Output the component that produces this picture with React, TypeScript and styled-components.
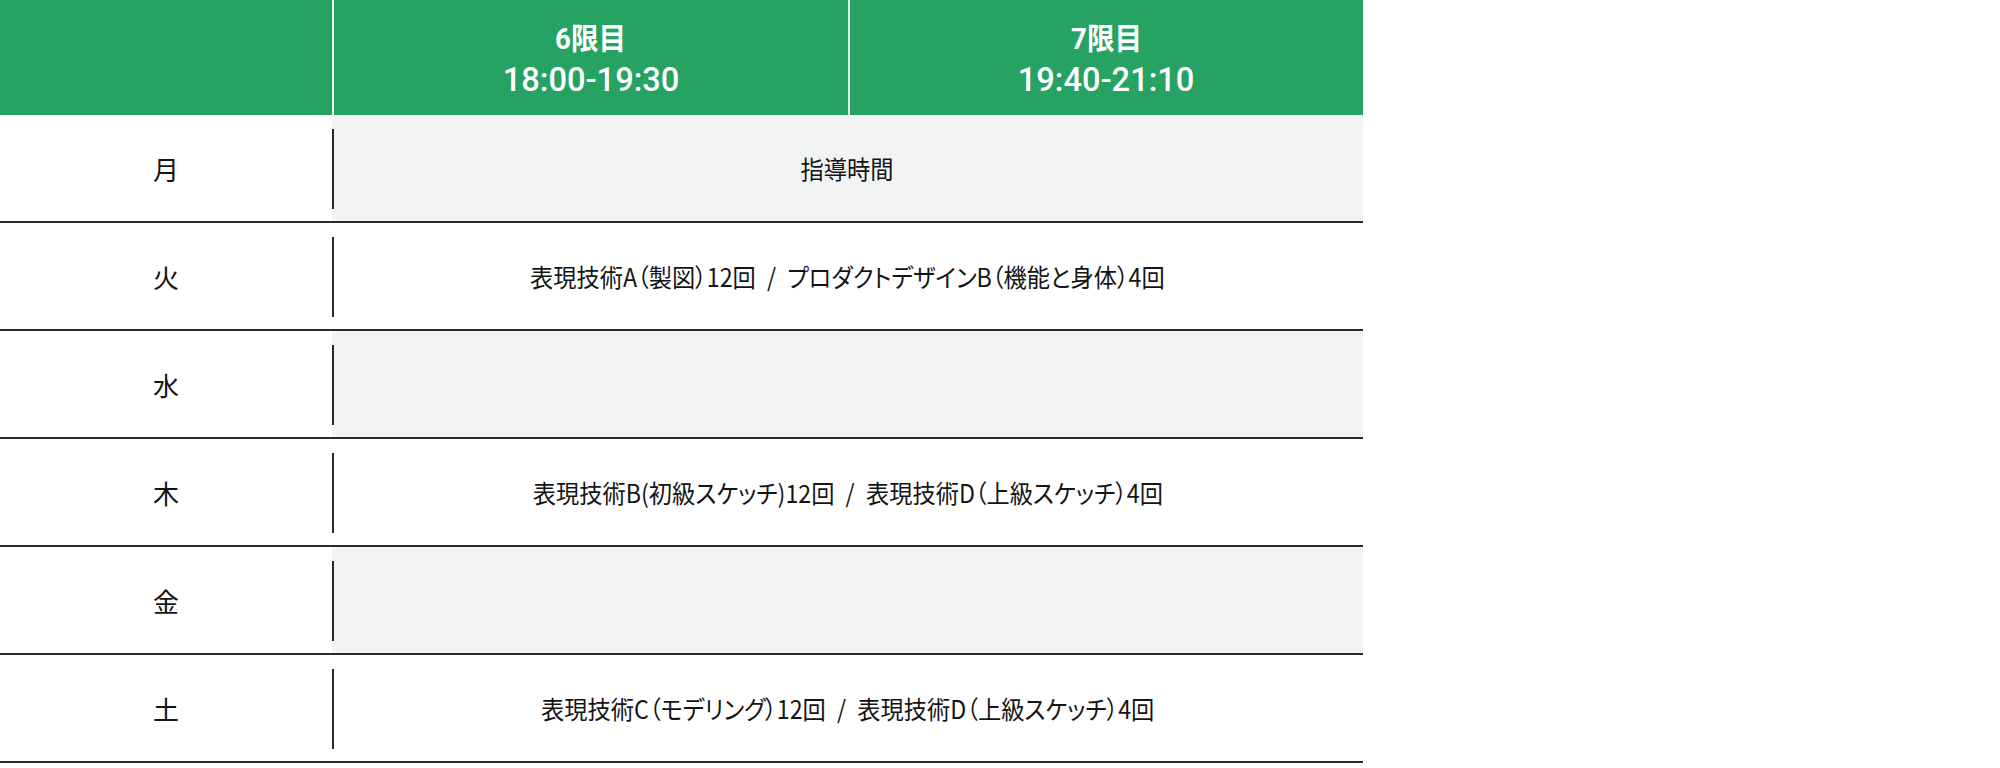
import styled, { createGlobalStyle } from "styled-components";

const GlobalStyle = createGlobalStyle`
  html, body {
    margin: 0;
    padding: 0;
    background: #ffffff;
  }
  body {
    font-family: "Noto Sans CJK JP", "Noto Sans", sans-serif;
    color: #141414;
  }
`;

const Table = styled.div`
  width: 1363px;
  display: grid;
  grid-template-columns: 332px 516px 515px;
`;

const HeadCell = styled.div<{ $divider?: boolean }>`
  height: 115px;
  background: #26a262;
  color: #ffffff;
  display: flex;
  flex-direction: column;
  align-items: center;
  justify-content: center;
  border-left: ${(props) => (props.$divider ? "2px solid #e6f3ea" : "none")};
  font-family: "Roboto", "Noto Sans CJK JP", sans-serif;
  line-height: 40px;
  padding-top: 2px;
  box-sizing: border-box;
`;

const Period = styled.span`
  display: inline-block;
  font-size: 30px;
  font-weight: 700;
  transform: scaleX(0.92);
`;

const Time = styled.span`
  display: inline-block;
  font-size: 34px;
  font-weight: 500;
  transform: scaleX(0.96);
`;

const Row = styled.div`
  grid-column: 1 / -1;
  display: grid;
  grid-template-columns: 332px 1fr;
  height: 108px;
  border-bottom: 2px solid #2a2a2a;
  box-sizing: border-box;
`;

const DayCell = styled.div`
  display: flex;
  align-items: center;
  justify-content: center;
  font-size: 26px;
  font-weight: 400;
  background: #ffffff;
`;

const Content = styled.div<{ $shaded: boolean }>`
  position: relative;
  display: flex;
  align-items: center;
  justify-content: center;
  background: ${(props) => (props.$shaded ? "#f2f3f5" : "#ffffff")};

  &::before {
    content: "";
    position: absolute;
    left: 0;
    top: 14px;
    bottom: 12px;
    width: 2px;
    background: #2a2a2a;
  }
`;

const ContentText = styled.span`
  display: inline-block;
  white-space: nowrap;
  font-size: 25px;
  font-feature-settings: "palt";
  transform: scaleX(0.93);
`;

const Slash = styled.span`
  margin: 0 12px;
`;

const rows = [
  { day: "月", parts: ["指導時間"] },
  { day: "火", parts: ["表現技術A（製図）12回", "プロダクトデザインB（機能と身体）4回"] },
  { day: "水", parts: [] },
  { day: "木", parts: ["表現技術B(初級スケッチ)12回", "表現技術D（上級スケッチ）4回"] },
  { day: "金", parts: [] },
  { day: "土", parts: ["表現技術C（モデリング）12回", "表現技術D（上級スケッチ）4回"] },
];

const App = () => {
  return (
    <>
      <GlobalStyle />
      <Table>
        <HeadCell />
        <HeadCell $divider>
          <Period>6限目</Period>
          <Time>18:00-19:30</Time>
        </HeadCell>
        <HeadCell $divider>
          <Period>7限目</Period>
          <Time>19:40-21:10</Time>
        </HeadCell>
        {rows.map((row, i) => (
          <Row key={row.day}>
            <DayCell>{row.day}</DayCell>
            <Content $shaded={i % 2 === 0}>
              {row.parts.length > 0 && (
                <ContentText>
                  {row.parts.map((part, j) => (
                    <span key={j}>
                      {j > 0 && <Slash>/</Slash>}
                      {part}
                    </span>
                  ))}
                </ContentText>
              )}
            </Content>
          </Row>
        ))}
      </Table>
    </>
  );
};

export default App;
